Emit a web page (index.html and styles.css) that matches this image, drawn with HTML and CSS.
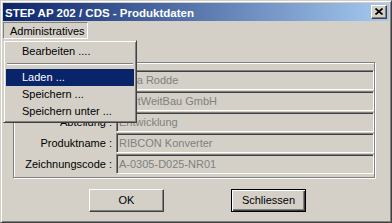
FILE: index.html
```html
<!DOCTYPE html>
<html>
<head>
<meta charset="utf-8">
<link rel="stylesheet" href="styles.css">
</head>
<body>
<div class="window">
  <div class="titlebar">
    <span class="title">STEP AP 202 / CDS - Produktdaten</span>
    <span class="close"><svg width="8" height="7" viewBox="0 0 8 7"><path d="M0.5 0.5 L7.5 6.5 M7.5 0.5 L0.5 6.5" stroke="#000" stroke-width="1.7" fill="none"/></svg></span>
  </div>
  <div class="menubar">
    <span class="menu-item open">Administratives</span>
  </div>
  <div class="content">
    <div class="group">
      <span class="label">Name :</span><span class="field">Jana Rodde</span>
      <span class="label">Firma :</span><span class="field">WeltWeitBau GmbH</span>
      <span class="label">Abteilung :</span><span class="field">Entwicklung</span>
      <span class="label">Produktname :</span><span class="field">RIBCON Konverter</span>
      <span class="label">Zeichnungscode :</span><span class="field">A-0305-D025-NR01</span>
    </div>
    <div class="buttons">
      <span class="btn">OK</span>
      <span class="btn default">Schliessen</span>
    </div>
  </div>
  <div class="dropdown">
    <div class="dd-item">Bearbeiten ....</div>
    <div class="dd-sep"></div>
    <div class="dd-item selected">Laden ...</div>
    <div class="dd-item">Speichern ...</div>
    <div class="dd-item">Speichern unter ...</div>
  </div>
</div>
</body>
</html>
```

FILE: styles.css
```css
* { box-sizing: border-box; }
html, body { margin: 0; padding: 0; }
body {
  background: #d4d0c8;
  font-family: "Liberation Sans", Arial, sans-serif;
  font-size: 11px;
  color: #000;
}
.window {
  position: relative;
  width: 392px;
  height: 223px;
  background: #d4d0c8;
  border: 1px solid;
  border-color: #d4d0c8 #404040 #404040 #d4d0c8;
  box-shadow: inset 1px 1px #fff, inset -1px -1px #808080;
  padding: 2px;
  display: flex;
  flex-direction: column;
  overflow: hidden;
}
.titlebar {
  height: 18px;
  background: linear-gradient(to right, #0a246a, #a6caf0);
  display: flex;
  align-items: center;
  padding-left: 2px;
}
.title {
  flex: 1;
  color: #fff;
  font-weight: bold;
  font-size: 11.5px;
  line-height: 18px;
  padding-top: 1px;
  white-space: nowrap;
}
.close {
  width: 16px;
  height: 14px;
  margin-right: 2px;
  background: #d4d0c8;
  border: 1px solid;
  border-color: #fff #404040 #404040 #fff;
  box-shadow: inset -1px -1px #808080;
  display: flex;
  align-items: center;
  justify-content: center;
  padding: 0 1px 1px 0;
}
.close svg { display: block; }
.menubar {
  height: 19px;
  padding-top: 1px;
  display: flex;
}
.menu-item {
  width: 85px;
  height: 17px;
  padding: 2px 0 0 6px;
  line-height: 13px;
  border: 1px solid;
  border-color: #808080 #fff #fff #808080;
  white-space: nowrap;
}
.content {
  display: flex;
  flex-direction: column;
  padding-top: 22px;
}
.group {
  margin-left: 10px;
  width: 362px;
  border: 1px solid #808080;
  box-shadow: inset 1px 1px #fff, 1px 1px #fff;
  padding: 7px 0 3px 0;
  display: grid;
  grid-template-columns: 98px 1fr;
  column-gap: 4px;
  row-gap: 1px;
}
.label {
  text-align: right;
  line-height: 20px;
  height: 20px;
  white-space: nowrap;
}
.field {
  height: 20px;
  line-height: 18px;
  border: 1px solid;
  border-color: #808080 #fff #fff #808080;
  box-shadow: inset 1px 1px #404040, inset -1px -1px #d4d0c8;
  padding-left: 2px;
  color: #808080;
  white-space: nowrap;
  overflow: hidden;
}
.buttons {
  margin-top: 11px;
  padding-left: 3px;
  display: flex;
  justify-content: center;
  gap: 67px;
}
.btn {
  width: 75px;
  height: 23px;
  line-height: 21px;
  text-align: center;
  background: #d4d0c8;
  border: 1px solid;
  border-color: #fff #404040 #404040 #fff;
  box-shadow: inset -1px -1px #808080;
}
.btn.default {
  border-color: #000;
  box-shadow: inset 1px 1px #fff, inset -1px -1px #404040, inset -2px -2px #808080;
}
.dropdown {
  position: absolute;
  left: 2px;
  top: 39px;
  width: 134px;
  background: #d4d0c8;
  border: 1px solid;
  border-color: #d4d0c8 #404040 #404040 #d4d0c8;
  box-shadow: inset 1px 1px #fff, inset -1px -1px #808080;
  padding: 2px;
}
.dd-item {
  height: 17px;
  line-height: 17px;
  padding-left: 16px;
  white-space: nowrap;
}
.dd-item.selected {
  background: #0a246a;
  color: #fff;
}
.dd-sep {
  height: 9px;
  padding-top: 3px;
  margin: 0 1px;
}
.dd-sep::before {
  content: "";
  display: block;
  border-top: 1px solid #808080;
  border-bottom: 1px solid #fff;
}
```
